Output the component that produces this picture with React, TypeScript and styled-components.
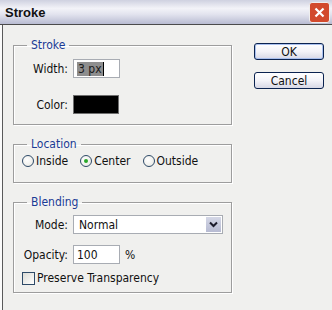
import styled, { createGlobalStyle } from 'styled-components';

const Global = createGlobalStyle`
  html, body {
    margin: 0;
    padding: 0;
    background: #fbfbfb;
  }
  * {
    box-sizing: border-box;
  }
`;

const ui = `"DejaVu Sans Condensed", "DejaVu Sans", sans-serif`;

const Window = styled.div`
  width: 332px;
  height: 310px;
  display: flex;
  flex-direction: column;
  font-family: ${ui};
  font-size: 11px;
  color: #111;
  overflow: hidden;
`;

const TitleBar = styled.div`
  height: 25px;
  flex: none;
  display: flex;
  align-items: center;
  justify-content: space-between;
  padding: 0 2px 0 5px;
  border-bottom: 1px solid #4b4b4b;
  background: linear-gradient(#cfd1e0 0%, #f3f3f8 35%, #e2e3ee 60%, #b9bcd2 100%);
`;

const Title = styled.span`
  font-family: "Liberation Sans", Arial, sans-serif;
  font-weight: bold;
  font-size: 13px;
  color: #111;
`;

const CloseBtn = styled.div`
  width: 21px;
  height: 21px;
  flex: none;
  border-radius: 3px;
  border: 1px solid #eeeeee;
  background: #d24a2c;
  display: flex;
  align-items: center;
  justify-content: center;
`;

const Body = styled.div`
  flex: 1;
  display: flex;
  align-items: flex-start;
  margin-left: 2px;
  border-left: 1px solid #5a5a5a;
  background: #f0f0ee;
  padding: 13px 0 0 10px;
`;

const Column = styled.div`
  width: 220px;
  display: flex;
  flex-direction: column;
  gap: 12px;
`;

const Group = styled.fieldset<{ $pt: number; $pb: number }>`
  margin: 0;
  width: 219px;
  padding: ${({ $pt }) => $pt}px 0 ${({ $pb }) => $pb}px 0;
  border: 1px solid #9d9d9d;
  box-shadow: inset 1px 1px 0 #fff, 1px 1px 0 #fff;
`;

const Legend = styled.legend`
  margin-left: 13px;
  padding: 0 4px;
  line-height: 14px;
  font-size: 12px;
  color: #1b3b95;
`;

const FormGrid = styled.div<{ $gap: number }>`
  display: grid;
  grid-template-columns: 54px auto;
  column-gap: 5px;
  row-gap: ${({ $gap }) => $gap}px;
  align-items: center;
  justify-items: start;
`;

const Label = styled.span`
  justify-self: end;
  font-size: 12px;
`;

const TextBox = styled.div`
  width: 47px;
  height: 19px;
  border: 1px solid #a8acb3;
  background: #fff;
  display: flex;
  align-items: center;
  padding-left: 3px;
  font-size: 12px;
`;

const Selected = styled.span`
  background: #8e8e8e;
  color: #1a1a1a;
  padding: 0 1px;
  border-right: 1px solid #000;
`;

const Swatch = styled.div`
  width: 46px;
  height: 19px;
  background: #000;
  border: 1px solid #6f6f6f;
`;

const Inline = styled.div`
  display: flex;
  align-items: center;
  gap: 5px;
  font-size: 12px;
`;

const Select = styled.div`
  width: 150px;
  height: 19px;
  border: 1px solid #a8acb3;
  background: #fff;
  display: flex;
  align-items: center;
  justify-content: space-between;
  padding: 0 1px 0 5px;
  font-size: 12px;
`;

const DropBtn = styled.div`
  width: 15px;
  height: 15px;
  background: linear-gradient(#d4d7e6, #b7bbd2);
  display: flex;
  align-items: center;
  justify-content: center;
`;

const RadioRow = styled.div`
  display: flex;
  align-items: center;
  gap: 12px;
  padding-left: 8px;
  font-size: 12px;
`;

const Option = styled.label`
  display: flex;
  align-items: center;
  gap: 2px;
`;

const Radio = styled.span<{ $on?: boolean }>`
  width: 12px;
  height: 12px;
  border-radius: 50%;
  border: 1px solid #2e4a68;
  background: radial-gradient(circle at 40% 40%, #fff 0%, #e6e6e0 100%);
  display: flex;
  align-items: center;
  justify-content: center;
  &::after {
    content: '';
    width: 4px;
    height: 4px;
    border-radius: 50%;
    background: ${({ $on }) => ($on ? '#2aa82a' : 'transparent')};
  }
`;

const CheckRow = styled.label`
  display: flex;
  align-items: center;
  gap: 2px;
  padding-left: 8px;
  margin-top: 7px;
  font-size: 12px;
`;

const Check = styled.span`
  width: 13px;
  height: 13px;
  border: 1px solid #2e4a68;
  background: linear-gradient(135deg, #dcdcd6, #fff);
`;

const Buttons = styled.div`
  display: flex;
  flex-direction: column;
  gap: 12px;
  margin: 5px 0 0 21px;
`;

const Button = styled.div<{ $default?: boolean }>`
  width: 70px;
  height: 17px;
  border: 1px solid #0b2350;
  border-radius: 3px;
  background: linear-gradient(#ffffff 0%, #f3f3f8 50%, #d7d8e6 100%);
  display: flex;
  align-items: center;
  justify-content: center;
  font-size: 12px;
  box-shadow: ${({ $default }) => ($default ? 'inset 0 0 0 1px #a9c0ee' : 'none')};
`;

export default function App() {
  return (
    <>
      <Global />
      <Window>
        <TitleBar>
          <Title>Stroke</Title>
          <CloseBtn>
            <svg width="11" height="11" viewBox="0 0 11 11">
              <path d="M1.5 1.5 L9.5 9.5 M9.5 1.5 L1.5 9.5" stroke="#ffffff" strokeWidth="2.2" />
            </svg>
          </CloseBtn>
        </TitleBar>
        <Body>
          <Column>
            <Group $pt={7} $pb={10}>
              <Legend>Stroke</Legend>
              <FormGrid $gap={17}>
                <Label>Width:</Label>
                <TextBox>
                  <Selected>3 px</Selected>
                </TextBox>
                <Label>Color:</Label>
                <Swatch />
              </FormGrid>
            </Group>
            <Group $pt={3} $pb={14}>
              <Legend>Location</Legend>
              <RadioRow>
                <Option>
                  <Radio />
                  Inside
                </Option>
                <Option>
                  <Radio $on />
                  Center
                </Option>
                <Option>
                  <Radio />
                  Outside
                </Option>
              </RadioRow>
            </Group>
            <Group $pt={6} $pb={7}>
              <Legend>Blending</Legend>
              <FormGrid $gap={11}>
                <Label>Mode:</Label>
                <Select>
                  Normal
                  <DropBtn>
                    <svg width="9" height="7" viewBox="0 0 9 7">
                      <path d="M1 1.5 L4.5 5 L8 1.5" fill="none" stroke="#1c1c2c" strokeWidth="2" />
                    </svg>
                  </DropBtn>
                </Select>
                <Label>Opacity:</Label>
                <Inline>
                  <TextBox>100</TextBox>%
                </Inline>
              </FormGrid>
              <CheckRow>
                <Check />
                Preserve Transparency
              </CheckRow>
            </Group>
          </Column>
          <Buttons>
            <Button $default>OK</Button>
            <Button>Cancel</Button>
          </Buttons>
        </Body>
      </Window>
    </>
  );
}
